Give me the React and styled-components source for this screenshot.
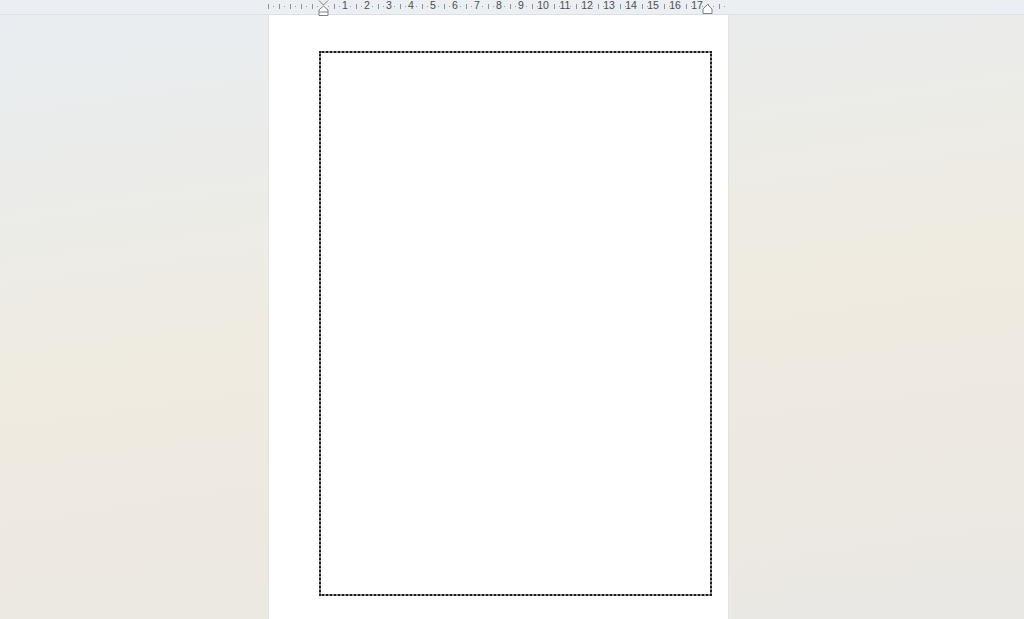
import React from "react";
import styled, { createGlobalStyle } from "styled-components";

const GlobalStyle = createGlobalStyle`
  html, body {
    margin: 0;
    padding: 0;
    font-family: "Liberation Sans", Arial, sans-serif;
  }
`;

const CM = 22;
const START = -10; // quarter cm steps left of zero
const END = 73;
const LAST_NUMBER = 17;

const Desk = styled.div`
  width: 1024px;
  height: 619px;
  overflow: hidden;
  display: flex;
  flex-direction: column;
  background: linear-gradient(
    172deg,
    #e8edf2 0%,
    #ebece9 25%,
    #efebe1 50%,
    #ede9e1 75%,
    #eae8e5 100%
  );
`;

const RulerBar = styled.div`
  height: 14px;
  flex: none;
  background: #ebeef2;
  border-bottom: 1px solid #dde1e6;
  position: relative;
`;

const Scale = styled.div`
  position: relative;
  margin-left: ${268 - CM / 8}px;
  height: 100%;
  display: flex;
  align-items: center;
`;

const Cell = styled.div`
  width: ${CM / 4}px;
  flex: none;
  height: 100%;
  display: flex;
  align-items: center;
  justify-content: center;
  overflow: visible;
`;

const Tick = styled.span`
  display: block;
  width: 1px;
  height: 5px;
  margin-top: -2px;
  background: #8d9095;
`;

const Dot = styled.span`
  display: block;
  width: 1px;
  height: 1px;
  margin-top: -2px;
  background: #9a9da2;
`;

const Num = styled.span`
  font-size: 10.5px;
  line-height: 10px;
  color: #4a4d52;
  white-space: nowrap;
  margin-top: -4px;
`;

const Marker = styled.svg`
  position: absolute;
  top: ${(p) => p.$top}px;
  left: ${(p) => p.$left}px;
`;

const Page = styled.div`
  margin-left: 269px;
  width: 459px;
  flex: 1;
  background: #ffffff;
  box-shadow: -1px 0 0 #e4e2dc, 1px 0 0 #e4e2dc;
  padding: 36px 16px 0 50px;
  box-sizing: border-box;
`;

const Frame = styled.div`
  width: 393px;
  height: 545px;
  box-sizing: border-box;
  border: 2px dotted #1c1c1c;
  background: #8a8a8a;
  box-shadow: inset 0 0 0 400px #ffffff;
`;

function RulerCell({ k }) {
  if (k > 0 && k % 4 === 0 && k / 4 <= LAST_NUMBER) return <Cell><Num>{k / 4}</Num></Cell>;
  if (k === 0) return <Cell />;
  if (k % 2 === 0) return <Cell><Tick /></Cell>;
  return <Cell><Dot /></Cell>;
}

function Ruler() {
  const cells = [];
  for (let k = START; k <= END; k++) cells.push(<RulerCell key={k} k={k} />);
  return (
    <RulerBar>
      <Scale>{cells}</Scale>
      <Marker $left={318} $top={0} width="11" height="16" viewBox="0 0 11 16">
        <path d="M1 0.5 L5.5 5 L10 0.5" fill="none" stroke="#7d8086" />
        <path d="M5.5 6 L10 10 L10 15.5 L1 15.5 L1 10 Z" fill="#ffffff" stroke="#7d8086" />
        <path d="M1 12 L10 12" stroke="#7d8086" />
      </Marker>
      <Marker $left={702} $top={4} width="11" height="10" viewBox="0 0 11 10">
        <path d="M5.5 0.5 L10 5 L10 9.5 L1 9.5 L1 5 Z" fill="#ffffff" stroke="#7d8086" />
      </Marker>
    </RulerBar>
  );
}

export default function App() {
  return (
    <>
      <GlobalStyle />
      <Desk>
        <Ruler />
        <Page>
          <Frame />
        </Page>
      </Desk>
    </>
  );
}
